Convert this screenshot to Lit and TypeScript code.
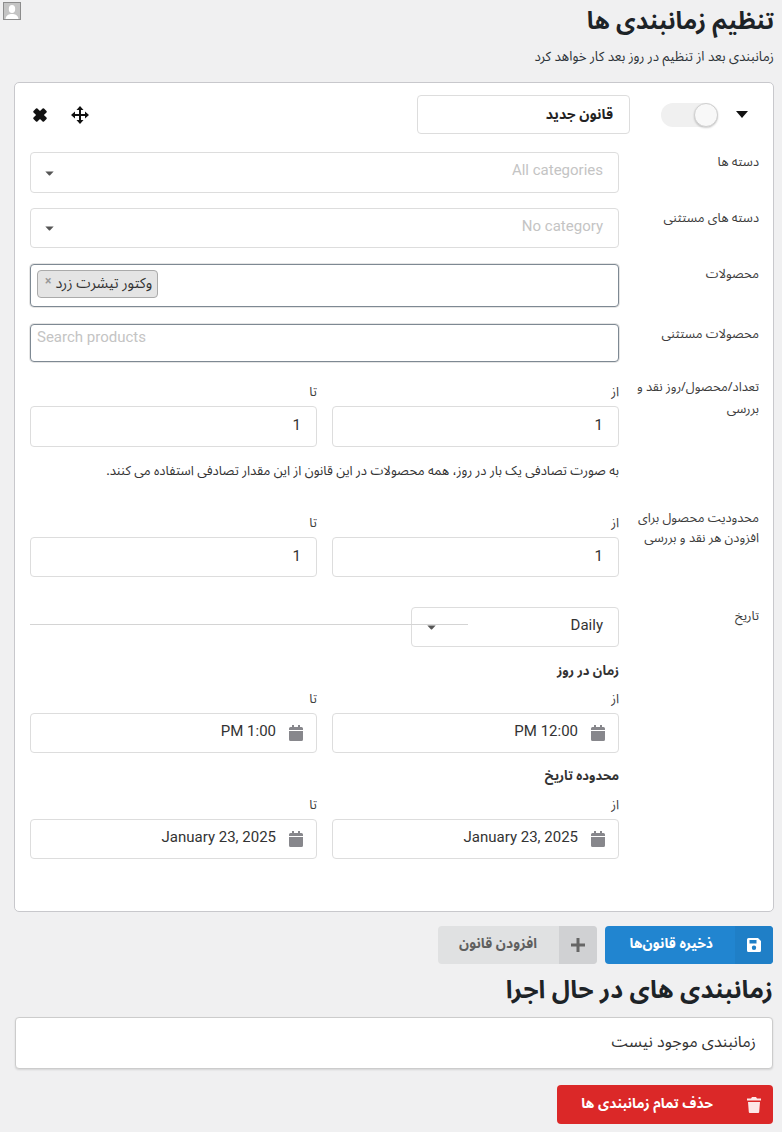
import { LitElement, html, css } from "lit";
import { customElement } from "lit/decorators.js";

const calendar = html`<svg class="cal" viewBox="0 0 14 16" width="14" height="16"><path fill="#87878c" d="M3 0h2v2h4V0h2v2h1.500A1.500 1.500 0 0 1 14 3.500V5H0V3.500A1.500 1.500 0 0 1 1.500 2H3z"/><path fill="#87878c" d="M0 6h14v8.500a1.500 1.500 0 0 1-1.500 1.500h-11A1.500 1.500 0 0 1 0 14.500z"/></svg>`;
const caret = html`<svg class="caret" viewBox="0 0 10 6" width="9" height="5"><path fill="#555" d="M0 0.500h10L5.500 5.500h-1z"/></svg>`;

@customElement("app-root")
export class AppRoot extends LitElement {
  static styles = css`
    :host { display: block; position: relative; box-sizing: border-box; height: 1132px; overflow: hidden; background: #f0f0f1; padding: 0 8px 0 8px;
      font-family: "Noto Sans Arabic", "Vazirmatn", "DejaVu Sans", "Noto Sans", sans-serif; color: #2c3338; font-size: 13px; direction: rtl; }
    * { box-sizing: border-box; }
    .avatar { position: absolute; left: 3px; top: 2px; width: 18px; height: 18px; border: 1px solid #8c8c8c; background: #c4c4c4; }
    .avatar svg { display: block; }
    h1 { margin: 0; padding-top: 5px; height: 45px; font-size: 24px; line-height: 34px; font-weight: 700; color: #1d2327; }
    .sub { margin: 0; height: 37px; padding-top: 3px; font-size: 13.300px; line-height: 18px; }
    .card { margin-left: 6px; height: 830px; background: #fff; border: 1px solid #c8c8cc; border-radius: 5px; padding: 12px 14px 0 15px; }
    .head { display: flex; align-items: center; height: 39px; margin-bottom: 18px; }
    .arrow { width: 12px; margin-right: 11px; display: flex; }
    .toggle { width: 57px; height: 24px; margin-right: 18px; border-radius: 12px; background: #f0f0f0; position: relative; }
    .knob { position: absolute; left: 33px; top: 0; width: 24px; height: 24px; border-radius: 50%; background: #f8f8f8; border: 1px solid #d0d0d0; box-shadow: 0 1px 2px rgba(0,0,0,.2); }
    .title { width: 213px; height: 39px; margin-right: 31px; border: 1px solid #ddd; border-radius: 4px; display: flex; align-items: center; padding: 0 16px; font-weight: 700; font-size: 14px; color: #222; }
    .tools { margin-right: auto; display: flex; align-items: center; gap: 23px; padding-left: 2px; }
    .row { display: grid; grid-template-columns: 124px 589px; column-gap: 16px; }
    .h56 { height: 56px; } .h60 { height: 60px; } .h58 { height: 58px; } .h131 { height: 131px; } .h94 { height: 94px; }
    .lab { font-size: 12.800px; line-height: 20px; color: #3c3c3c; }
    .lab.l1 { line-height: 22px; margin-top: -6px; }
    .lab.l2 { margin-top: -5px; }
    .lab.l3 { margin-top: -1px; }
    .box { border: 1px solid #ddd; border-radius: 4px; background: #fff; height: 40px; display: flex; align-items: center; padding: 0 15px 0 14px; font-family: Roboto, sans-serif; font-size: 15px; color: #333; }
    .box.b41 { height: 41px; }
    .ph { color: #c4c4c4; flex: 1; padding-bottom: 5px; }
    .caret { flex: none; margin-top: 1px; }
    .dark { border: 1px solid #7e8993; box-shadow: 0 0 0 1px #e5e5e5; border-radius: 4px; }
    .tag { display: inline-flex; align-items: center; gap: 4px; height: 28px; padding: 0 5px 2px 7px; background: #e4e4e4; border: 1px solid #aaa; border-radius: 4px; font-size: 14.500px; color: #333; direction: rtl; white-space: nowrap; }
    .tag i { font: 700 12px Roboto, sans-serif; color: #999; margin-top: -4px; }
    .multi { height: 43px; padding: 5px 6px; align-items: flex-start; font-family: inherit; direction: ltr; }
    .search { height: 38px; padding: 2px 6px; align-items: flex-start; direction: ltr; justify-content: flex-start; }
    .search .ph { padding: 0; line-height: 20px; }
    .pair { display: grid; grid-template-columns: 287px 287px; column-gap: 15px; }
    .sm { display: block; height: 20px; font-size: 13px; line-height: 20px; color: #3c3c3c; margin-bottom: 4px; }
    .box.num { padding-bottom: 3px; justify-content: flex-start; }
    .box.date { gap: 13px; padding: 0 13px 4px; }
    .cal { flex: none; margin-top: 4px; }
    .help { margin: 14px 0 0; height: 22px; font-size: 13px; line-height: 20px; color: #333; white-space: nowrap; }
    .strong { display: block; height: 20px; font-size: 13px; line-height: 20px; font-weight: 700; color: #333; }
    .s1 { margin-bottom: 8px; }
    .s2 { margin: 13px 0 9px; }
    .datewrap { position: relative; height: 54px; }
    .dsel { width: 208px; justify-content: space-between; padding-left: 14px; }
    .dsel span { padding-bottom: 4px; }
    .dsel .caret { margin-left: 1px; }
    .rule { position: absolute; left: 0; top: 17px; width: 438px; height: 1px; background: #d4d4d4; }
    .btns { display: flex; gap: 8px; margin: 14px 1px 0 0; height: 38px; }
    .btn { display: flex; height: 38px; border-radius: 4px; overflow: hidden; font-weight: 700; font-size: 13.800px; align-items: stretch; }
    .btn .ic { width: 38px; flex: none; display: flex; align-items: center; justify-content: center; }
    .btn .tx { flex: 1; display: flex; align-items: center; padding: 0 22px 3px 0; white-space: nowrap; }
    .blue { width: 168px; background: #2185d0; color: #fff; }
    .blue .ic { background: #1f7fc7; }
    .grey { width: 159px; background: #e0e1e2; color: #5f5f5f; }
    .grey .ic { background: #d0d1d3; }
    h2 { margin: 8px 1px 0 0; height: 45px; font-size: 24.800px; line-height: 36px; font-weight: 700; color: #1d2327; }
    .empty { margin: 0 1px 0 1px; width: 758px; height: 52px; background: #fff; border: 1px solid #ccc; border-radius: 4px; box-shadow: 0 1px 2px rgba(0,0,0,.12); padding: 0 16px 2px; display: flex; align-items: center; font-size: 16px; color: #333; }
    .red { margin: 16px 1px 0 0; width: 216px; height: 39px; background: #db2828; color: #fff; }
  `;

  private range(a: unknown, b: unknown, cls: string) {
    return html`<div class="pair">
      <div><span class="sm">از</span><div class="box ${cls}">${a}</div></div>
      <div><span class="sm">تا</span><div class="box ${cls}">${b}</div></div>
    </div>`;
  }

  render() {
    return html`
      <div class="avatar"><svg viewBox="0 0 16 16" width="16" height="16"><ellipse cx="8" cy="6" rx="3.200" ry="4" fill="#fff"/><path fill="#fff" d="M1.500 16c.5-4 3.500-5 6.500-5s6 1 6.500 5z"/></svg></div>
      <h1>تنظیم زمانبندی ها</h1>
      <p class="sub">زمانبندی بعد از تنظیم در روز بعد کار خواهد کرد</p>
      <section class="card">
        <div class="head">
          <span class="arrow"><svg viewBox="0 0 12 7" width="12" height="7"><path fill="#111" d="M0 0h12L6 7z"/></svg></span>
          <span class="toggle"><span class="knob"></span></span>
          <div class="title">قانون جدید</div>
          <div class="tools">
            <svg viewBox="0 0 18 18" width="18" height="18"><path fill="#111" d="M9 0l3.500 4H10v4h4V5.500L18 9l-4 3.500V10h-4v4h2.500L9 18l-3.500-4H8v-4H4v2.500L0 9l4-3.500V8h4V4H5.500z"/></svg>
            <svg viewBox="0 0 16 16" width="16" height="16"><path fill="#111" d="M1.500 4 4 1.500a1 1 0 0 1 1.400 0L8 4.100l2.600-2.600a1 1 0 0 1 1.400 0L14.500 4a1 1 0 0 1 0 1.400L11.900 8l2.600 2.600a1 1 0 0 1 0 1.400L12 14.500a1 1 0 0 1-1.400 0L8 11.900l-2.600 2.600a1 1 0 0 1-1.400 0L1.500 12a1 1 0 0 1 0-1.400L4.100 8 1.500 5.400a1 1 0 0 1 0-1.400z"/></svg>
          </div>
        </div>
        <div class="row h56"><div class="lab">دسته ها</div><div class="box b41"><span class="ph">All categories</span>${caret}</div></div>
        <div class="row h56"><div class="lab">دسته های مستثنی</div><div class="box"><span class="ph">No category</span>${caret}</div></div>
        <div class="row h60"><div class="lab">محصولات</div><div class="box dark multi"><span class="tag">وکتور تیشرت زرد <i>×</i></span></div></div>
        <div class="row h58"><div class="lab">محصولات مستثنی</div><div class="box dark search"><span class="ph">Search products</span></div></div>
        <div class="row h131"><div class="lab l1">تعداد/محصول/روز نقد و بررسی</div>
          <div>${this.range("1", "1", "num b41")}<p class="help">به صورت تصادفی یک بار در روز، همه محصولات در این قانون از این مقدار تصادفی استفاده می کنند.</p></div></div>
        <div class="row h94"><div class="lab l2">محدودیت محصول برای افزودن هر نقد و بررسی</div>
          <div>${this.range("1", "1", "num")}</div></div>
        <div class="row"><div class="lab l3">تاریخ</div>
          <div>
            <div class="datewrap"><div class="box dsel"><span>Daily</span>${caret}</div><div class="rule"></div></div>
            <span class="strong s1">زمان در روز</span>
            ${this.range(html`${calendar}<span>12:00 PM</span>`, html`${calendar}<span>1:00 PM</span>`, "date")}
            <span class="strong s2">محدوده تاریخ</span>
            ${this.range(html`${calendar}<span>January 23, 2025</span>`, html`${calendar}<span>January 23, 2025</span>`, "date")}
          </div>
        </div>
      </section>
      <div class="btns">
        <div class="btn blue"><span class="ic"><svg viewBox="0 0 14 14" width="14" height="14"><path fill="#fff" fill-rule="evenodd" d="M1.500 0H11l3 3v9.500a1.500 1.500 0 0 1-1.500 1.500h-11A1.500 1.500 0 0 1 0 12.500v-11A1.500 1.500 0 0 1 1.500 0zM2.500 2v3.500h7V2zM7 7.500a2.200 2.200 0 1 0 0 4.400 2.200 2.200 0 0 0 0-4.400z"/></svg></span><span class="tx">ذخیره قانون‌ها</span></div>
        <div class="btn grey"><span class="ic"><svg viewBox="0 0 14 14" width="14" height="14"><path fill="#666" d="M5.500 0h3v5.500H14v3H8.500V14h-3V8.500H0v-3h5.500z"/></svg></span><span class="tx">افزودن قانون</span></div>
      </div>
      <h2>زمانبندی های در حال اجرا</h2>
      <div class="empty">زمانبندی موجود نیست</div>
      <div class="btn red"><span class="ic"><svg viewBox="0 0 14 16" width="14" height="16"><path fill="#fde8e8" d="M5 0h4l1 1.500h4v2H0v-2h4zM1 5h12l-.8 10a1 1 0 0 1-1 1H2.800a1 1 0 0 1-1-1z"/></svg></span><span class="tx">حذف تمام زمانبندی ها</span></div>
    `;
  }
}
